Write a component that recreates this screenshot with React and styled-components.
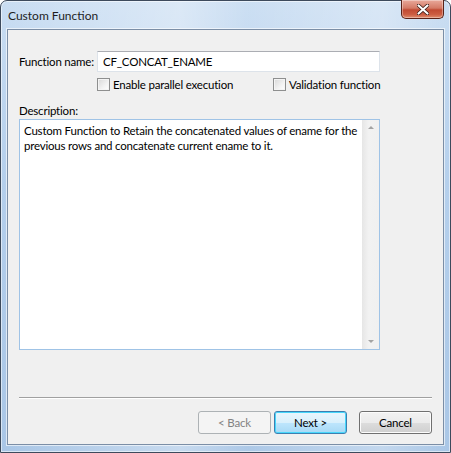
import React from "react";
import styled, { createGlobalStyle } from "styled-components";

const GlobalStyle = createGlobalStyle`
  html, body {
    margin: 0;
    padding: 0;
    background: #ffffff;
  }
  body {
    font-family: "Lato", "Liberation Sans", sans-serif;
    font-size: 11.5px;
    letter-spacing: -0.2px;
    color: #000;
  }
`;

const Window = styled.div`
  position: relative;
  width: 451px;
  height: 453px;
  box-sizing: border-box;
  border: 1px solid #3d4a5c;
  border-radius: 7px 7px 0 0;
  background:
    linear-gradient(90deg, rgba(255,255,255,0.0) 0%, rgba(255,255,255,0.35) 40%, rgba(255,255,255,0.05) 55%, rgba(255,255,255,0.3) 85%, rgba(255,255,255,0) 100%),
    linear-gradient(180deg, #c9ddf2 0%, #b4cfec 40%, #a9c6e6 100%);
  display: flex;
  flex-direction: column;
  box-shadow: inset 0 0 0 1px rgba(255,255,255,0.55);
`;

const TitleBar = styled.div`
  height: 28px;
  display: flex;
  align-items: center;
  padding-left: 7px;
  font-size: 12px;
  letter-spacing: 0;
  color: #1e1e1e;
`;

const CloseButton = styled.div`
  position: absolute;
  top: -1px;
  right: 6px;
  width: 43px;
  height: 19px;
  box-sizing: border-box;
  border: 1px solid #5a2218;
  border-top: none;
  border-radius: 0 0 5px 5px;
  background: linear-gradient(180deg, #e9a99b 0%, #d47a66 45%, #c14a33 55%, #cc5d42 80%, #e08c6d 100%);
  box-shadow: inset 0 0 0 1px rgba(255,255,255,0.35);
  display: flex;
  align-items: center;
  justify-content: center;
`;

const Client = styled.div`
  flex: 1;
  margin: 0 6px 7px 6px;
  border: 1px solid #7b8ea6;
  background: #f0f0f0;
  display: flex;
  flex-direction: column;
  padding: 21px 11px 10px 11px;
  box-shadow: 0 0 0 1px rgba(255,255,255,0.6);
  white-space: nowrap;
`;

const Row = styled.div`
  display: flex;
  align-items: center;
`;

const Label = styled.span`
  width: 78px;
  flex-shrink: 0;
  color: #000;
`;

const TextInput = styled.div`
  width: 283px;
  height: 21px;
  box-sizing: border-box;
  border: 1px solid #dde3ea;
  border-top-color: #abadb3;
  background: #fff;
  padding: 0 5px;
  display: flex;
  align-items: center;
`;

const CheckRow = styled.div`
  display: flex;
  align-items: center;
  margin-top: 5px;
  padding-left: 78px;
  height: 15px;
`;

const Check = styled.label`
  display: flex;
  align-items: center;
  gap: 3px;
  width: ${(p) => p.$width}px;
  flex-shrink: 0;
`;

const Box = styled.span`
  width: 13px;
  height: 13px;
  flex-shrink: 0;
  box-sizing: border-box;
  border: 1px solid #8e8f8f;
  background: linear-gradient(135deg, #d8d8d8 0%, #f2f2f2 60%, #ffffff 100%);
  box-shadow: inset 0 0 0 1px #f4f4f4;
`;

const DescLabel = styled.div`
  margin-top: 12px;
  line-height: 14px;
  height: 14px;
`;

const TextBox = styled.div`
  margin-top: 1px;
  width: 361px;
  height: 231px;
  box-sizing: border-box;
  border: 1px solid #9fc3e6;
  background: #fff;
  display: flex;
`;

const TextContent = styled.div`
  flex: 1;
  padding: 3px 2px 3px 4px;
  line-height: 15px;
  white-space: normal;
`;

const ScrollBar = styled.div`
  width: 17px;
  flex-shrink: 0;
  background: linear-gradient(90deg, #e6e6e6 0%, #f2f2f2 40%, #f0f0f0 100%);
  display: flex;
  flex-direction: column;
  justify-content: space-between;
  align-items: center;
  padding: 6px 0;
`;

const Arrow = styled.span`
  width: 0;
  height: 0;
  border-left: 3px solid transparent;
  border-right: 3px solid transparent;
  ${(p) =>
    p.$down
      ? "border-top: 3px solid #a3a3a3;"
      : "border-bottom: 3px solid #a3a3a3;"}
`;

const Spacer = styled.div`
  flex: 1;
`;

const Separator = styled.div`
  height: 1px;
  background: #a0a0a0;
  border-bottom: 1px solid #ffffff;
`;

const ButtonRow = styled.div`
  display: flex;
  justify-content: flex-end;
  margin-top: 12px;
`;

const Button = styled.div`
  width: 73px;
  height: 23px;
  box-sizing: border-box;
  border-radius: 3px;
  display: flex;
  align-items: center;
  justify-content: center;
  margin-left: ${(p) => p.$gap || 0}px;
  border: 1px solid ${(p) => (p.$disabled ? "#adb2b5" : p.$default ? "#3c7fb1" : "#707070")};
  color: ${(p) => (p.$disabled ? "#838383" : "#000")};
  background: ${(p) =>
    p.$disabled
      ? "#f4f4f4"
      : p.$default
      ? "linear-gradient(180deg, #eaf6fd 0%, #d9f0fc 50%, #bee6fd 51%, #a7d9f5 100%)"
      : "linear-gradient(180deg, #f2f2f2 0%, #ebebeb 50%, #dddddd 51%, #cfcfcf 100%)"};
  box-shadow: ${(p) =>
    p.$disabled
      ? "none"
      : p.$default
      ? "inset 0 0 0 1px #48d7fb"
      : "inset 0 0 0 1px #fcfcfc"};
`;

export default function App() {
  return (
    <>
      <GlobalStyle />
      <Window>
        <TitleBar>Custom Function</TitleBar>
        <CloseButton>
          <svg width="12" height="11" viewBox="0 0 12 11">
            <path
              d="M1 1 L11 10 M11 1 L1 10"
              stroke="#3a1a14"
              strokeWidth="3.6"
              strokeLinecap="round"
            />
            <path
              d="M1.5 1.5 L10.5 9.5 M10.5 1.5 L1.5 9.5"
              stroke="#ffffff"
              strokeWidth="2.2"
              strokeLinecap="round"
            />
          </svg>
        </CloseButton>
        <Client>
          <Row>
            <Label>Function name:</Label>
            <TextInput>CF_CONCAT_ENAME</TextInput>
          </Row>
          <CheckRow>
            <Check $width={176}>
              <Box />
              Enable parallel execution
            </Check>
            <Check $width={110}>
              <Box />
              Validation function
            </Check>
          </CheckRow>
          <DescLabel>Description:</DescLabel>
          <TextBox>
            <TextContent>
              Custom Function to Retain the concatenated values of ename for the
              previous rows and concatenate current ename to it.
            </TextContent>
            <ScrollBar>
              <Arrow />
              <Arrow $down />
            </ScrollBar>
          </TextBox>
          <Spacer />
          <Separator />
          <ButtonRow>
            <Button $disabled>&lt; Back</Button>
            <Button $default $gap={3}>
              Next &gt;
            </Button>
            <Button $gap={12}>Cancel</Button>
          </ButtonRow>
        </Client>
      </Window>
    </>
  );
}
